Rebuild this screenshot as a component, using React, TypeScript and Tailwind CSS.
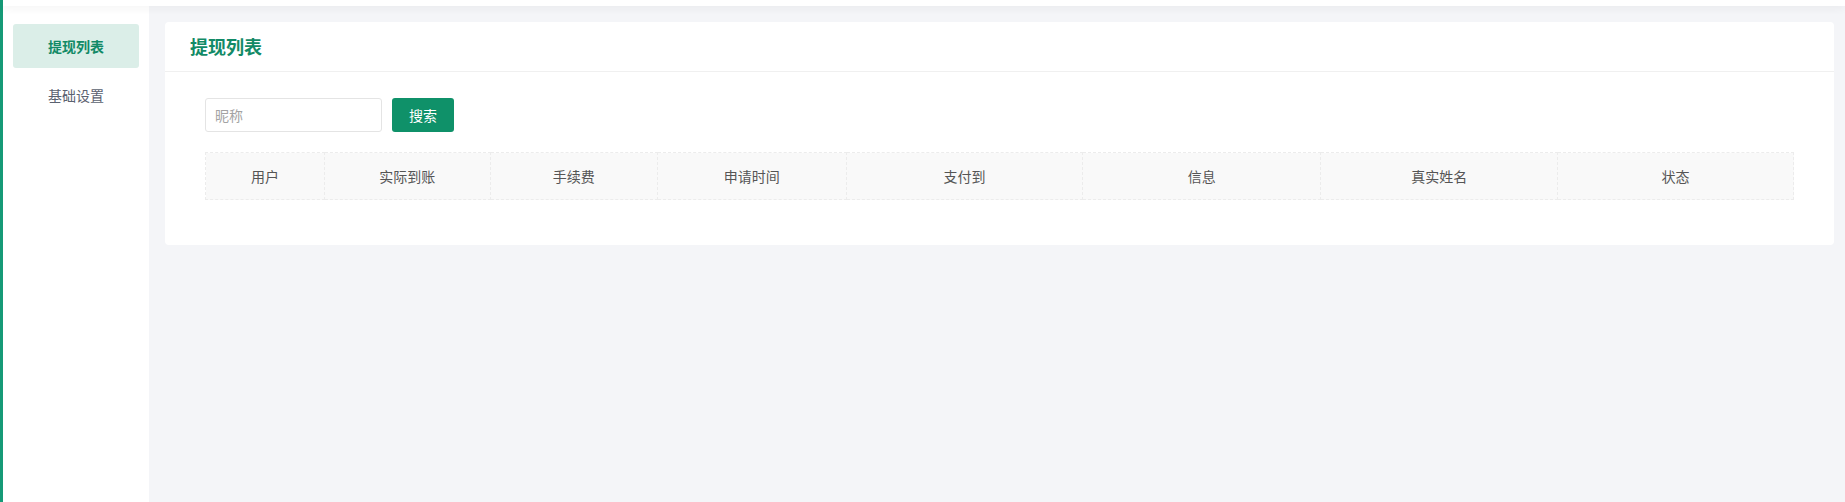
import React from "react"

const columns = [
  { title: "用户", w: "w-[119px]" },
  { title: "实际到账", w: "w-[166px]" },
  { title: "手续费", w: "w-[167px]" },
  { title: "申请时间", w: "w-[189px]" },
  { title: "支付到", w: "w-[237px]" },
  { title: "信息", w: "w-[238px]" },
  { title: "真实姓名", w: "w-[237px]" },
  { title: "状态", w: "w-[236px]" },
]

export default function App() {
  return (
    <div
      className="flex h-[502px] w-full overflow-hidden bg-[#f4f5f8]"
      style={{ fontFamily: '"Noto Sans CJK SC", "Noto Sans", sans-serif' }}
    >
      <div className="w-[3px] shrink-0 bg-[#159a77]" />
      <div className="flex flex-1 flex-col">
        <div className="relative z-10 h-[6px] bg-white shadow-[0_2px_8px_rgba(0,0,0,0.06)]" />
        <div className="flex flex-1">
          <aside className="flex w-[146px] shrink-0 flex-col gap-[5px] bg-white px-[10px] pt-[18px]">
            <button className="flex h-[44px] items-center justify-center rounded-[3px] bg-[#dbeee8] text-[14px] font-bold text-[#128a66]">
              提现列表
            </button>
            <button className="flex h-[44px] items-center justify-center text-[14px] text-[#5b6270]">
              基础设置
            </button>
          </aside>
          <main className="flex-1 pl-4 pr-[11px] pt-4">
            <section className="rounded-[4px] bg-white">
              <div className="flex h-[50px] items-center border-b border-[#f0f0f0] px-[25px]">
                <h1 className="text-[18px] font-bold text-[#128a66]">提现列表</h1>
              </div>
              <div className="px-[40px] pb-[45px] pt-[26px]">
                <div className="flex gap-[10px]">
                  <input
                    placeholder="昵称"
                    className="h-[34px] w-[177px] rounded-[3px] border border-[#e4e4e4] px-[9px] text-[14px] outline-none placeholder:text-[#a3a3a3]"
                  />
                  <button className="h-[34px] w-[62px] rounded-[3px] bg-[#0f9169] text-[14px] text-white">
                    搜索
                  </button>
                </div>
                <table className="mt-[20px] table-fixed border-collapse">
                  <thead>
                    <tr className="h-[47px] bg-[#f9f9f9]">
                      {columns.map((c) => (
                        <th
                          key={c.title}
                          className={`${c.w} border border-dashed border-[#ececec] text-center text-[14px] font-normal text-[#555]`}
                        >
                          {c.title}
                        </th>
                      ))}
                    </tr>
                  </thead>
                </table>
              </div>
            </section>
          </main>
        </div>
      </div>
    </div>
  )
}
